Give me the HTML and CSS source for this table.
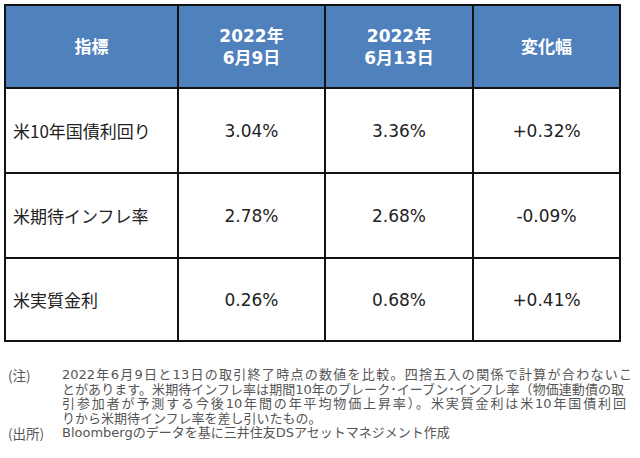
FILE: index.html
```html
<!DOCTYPE html>
<html lang="ja">
<head>
<meta charset="utf-8">
<link rel="stylesheet" href="styles.css">
</head>
<body>
<div class="grid">
  <div class="cell head">指標</div>
  <div class="cell head">2022年<br>6月9日</div>
  <div class="cell head">2022年<br>6月13日</div>
  <div class="cell head">変化幅</div>

  <div class="cell label">米10年国債利回り</div>
  <div class="cell">3.04%</div>
  <div class="cell">3.36%</div>
  <div class="cell">+0.32%</div>

  <div class="cell label">米期待インフレ率</div>
  <div class="cell">2.78%</div>
  <div class="cell">2.68%</div>
  <div class="cell">-0.09%</div>

  <div class="cell label">米実質金利</div>
  <div class="cell">0.26%</div>
  <div class="cell">0.68%</div>
  <div class="cell">+0.41%</div>
</div>

<div class="notes">
  <div class="tag">(注)</div>
  <div class="txt">
    <div class="line w1">2022年6月9日と13日の取引終了時点の数値を比較。四捨五入の関係で計算が合わないこ</div>
    <div class="line w2">とがあります。米期待インフレ率は期間10年のブレーク･イーブン･インフレ率（物価連動債の取</div>
    <div class="line w3">引参加者が予測する今後10年間の年平均物価上昇率）。米実質金利は米10年国債利回</div>
    <div class="line">りから米期待インフレ率を差し引いたもの。</div>
  </div>
  <div class="tag">(出所)</div>
  <div class="txt">
    <div class="line">Bloombergのデータを基に三井住友DSアセットマネジメント作成</div>
  </div>
</div>
</body>
</html>
```

FILE: styles.css
```css
html, body {
  margin: 0;
  padding: 0;
  background: #ffffff;
}

body {
  font-family: "DejaVu Sans", "Noto Sans CJK JP", sans-serif;
  color: #222222;
}

.grid {
  margin: 4px 0 0 4px;
  display: grid;
  grid-template-columns: 173px 147px 148px 147px;
  grid-template-rows: 83px 85px 85px 83px;
  border-top: 2px solid #111111;
  border-left: 2px solid #111111;
  width: max-content;
}

.cell {
  box-sizing: border-box;
  border-right: 2px solid #111111;
  border-bottom: 2px solid #111111;
  display: flex;
  align-items: center;
  justify-content: center;
  text-align: center;
  font-size: 17px;
  line-height: 22px;
  color: #222222;
}

.head {
  background: #4f81bd;
  color: #ffffff;
  font-weight: bold;
  font-size: 17px;
  line-height: 22px;
}

.label {
  justify-content: flex-start;
  text-align: left;
  padding-left: 7px;
  font-family: "Noto Sans CJK JP", sans-serif;
  font-size: 17px;
}

.notes {
  margin: 26px 0 0 8px;
  display: grid;
  grid-template-columns: 54px auto;
  font-size: 13px;
  line-height: 14.5px;
  color: #555555;
  font-family: "DejaVu Sans", "Noto Sans CJK JP", sans-serif;
}

.tag {
  white-space: nowrap;
  font-family: "Noto Sans CJK JP", sans-serif;
  font-size: 13.5px;
}

.line {
  white-space: nowrap;
}

.w1, .w2, .w3 {
  text-align: justify;
  text-align-last: justify;
  text-justify: inter-character;
}

.w1 {
  width: 570px;
}

.w2 {
  width: 562px;
}

.w3 {
  width: 564px;
}
```
